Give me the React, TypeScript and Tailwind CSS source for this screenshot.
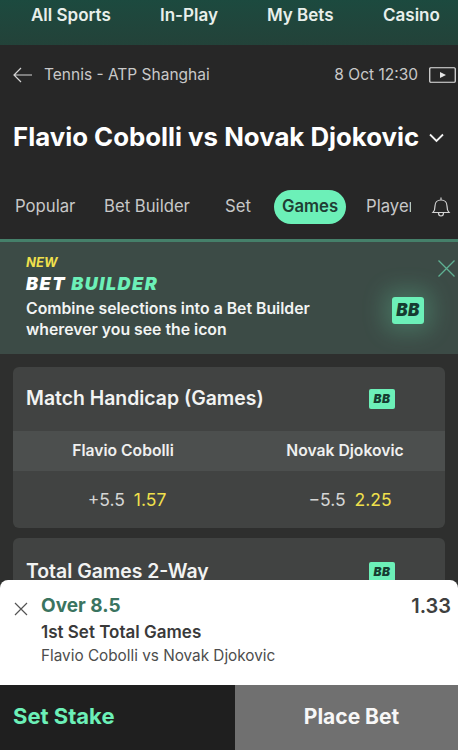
import React from "react";

function BB({ big }: { big?: boolean }) {
  return (
    <div
      className={
        big
          ? "flex h-[27px] w-[32px] items-center justify-center rounded-[3px] bg-[#6cf0b8] text-[17px] font-black italic tracking-[0.5px] text-[#163c30] shadow-[0_0_22px_8px_rgba(108,240,184,0.22)]"
          : "flex h-[20px] w-[26px] items-center justify-center rounded-[2px] bg-[#6cf0b8] text-[12px] font-black italic tracking-[0.5px] text-[#163c30]"
      }
    >
      BB
    </div>
  );
}

function CardHead({ title }: { title: string }) {
  return (
    <div className="flex h-[64px] items-center justify-between pl-[13px] pr-[50px]">
      <span className="text-[19.4px] font-semibold text-[#f2f3f2]">{title}</span>
      <BB />
    </div>
  );
}

export default function App() {
  return (
    <div className="relative flex h-[750px] w-[458px] flex-col overflow-hidden bg-[#2e2f2e] font-['Inter',sans-serif]">
      <nav className="flex h-[45px] items-start bg-gradient-to-b from-[#1c4a3f] to-[#234239] pt-[3px] text-[17px] font-semibold text-[#e8efeb]">
        <span className="ml-[31px] w-[129px]">All Sports</span>
        <span className="w-[107px]">In-Play</span>
        <span className="w-[116px]">My Bets</span>
        <span>Casino</span>
      </nav>

      <header className="flex h-[194px] flex-col bg-[#272727]">
        <div className="flex h-[59px] items-center pl-[13px] pr-[2px] text-[15.5px] text-[#c9c9c9]">
          <svg width="20" height="16" viewBox="0 0 20 16" fill="none" stroke="#d4d4d4" strokeWidth="1.2">
            <path d="M19 8H1M8 1 1 8l7 7" />
          </svg>
          <span className="ml-[11px]">Tennis - ATP Shanghai</span>
          <span className="ml-auto">8 Oct 12:30</span>
          <svg className="ml-[11px]" width="27" height="16" viewBox="0 0 27 16" fill="none">
            <rect x="0.75" y="0.75" width="25.5" height="14.5" rx="1" stroke="#e5e5e5" strokeWidth="1.2" />
            <path d="M11 5l6 3-6 3z" fill="#e5e5e5" />
          </svg>
        </div>
        <div className="mt-[10px] flex h-[45px] items-center pl-[13px] text-[25.8px] font-bold leading-none text-white">
          <span>Flavio Cobolli vs Novak Djokovic</span>
          <svg className="ml-[10px] mt-[2px]" width="15" height="10" viewBox="0 0 15 10" fill="none" stroke="#f2f2f2" strokeWidth="1.8">
            <path d="M1 1.5l6.5 6.5L14 1.5" />
          </svg>
        </div>
        <div className="mt-[30px] flex h-[35px] items-center pl-[15px] text-[16.7px] text-[#c8c8c8]">
          <span className="w-[60px]">Popular</span>
          <span className="ml-[29px] w-[88px]">Bet Builder</span>
          <span className="ml-[33px] w-[25px]">Set</span>
          <span className="ml-[24px] flex h-[34px] w-[72px] items-center justify-center rounded-full bg-[#6cf0b8] font-semibold text-[#1f3d33]">Games</span>
          <span className="ml-[20px] w-[45px] overflow-hidden whitespace-nowrap">Player</span>
          <svg className="ml-[20px]" width="20" height="22" viewBox="0 0 20 22" fill="none" stroke="#d4d4d4" strokeWidth="1.2">
            <path d="M2 16.5c1.5-1.5 2-3 2-6.5 0-3.5 2.3-6 6-6s6 2.500 6 6c0 3.500.5 5 2 6.500zM10 4V1.500M7.500 17c0 2 1 3 2.500 3s2.500-1 2.500-3" />
          </svg>
        </div>
      </header>

      <section className="relative flex h-[115px] items-start justify-between border-t-[3px] border-[#45806a] bg-[#3c4b46] pl-[26px] pr-[34px]">
        <div className="pt-[12px]">
          <div className="text-[13px] font-bold italic leading-[16px] text-[#f0e04c]">NEW</div>
          <div className="mt-[3px] text-[18px] font-black italic leading-[22px] tracking-[1.5px] text-white">
            BET <span className="text-[#6cf0b8]">BUILDER</span>
          </div>
          <div className="mt-[3px] text-[15.8px] font-semibold leading-[21px] text-[#f2f4f3]">
            Combine selections into a Bet Builder
            <br />
            wherever you see the icon
          </div>
        </div>
        <div className="mt-[55px]">
          <BB big />
        </div>
        <svg className="absolute right-[2px] top-[17px]" width="19" height="19" viewBox="0 0 19 19" fill="none" stroke="#5fb093" strokeWidth="1.3">
          <path d="M1.500 1.500l16 16M17.500 1.500l-16 16" />
        </svg>
      </section>

      <main className="flex flex-1 flex-col gap-[10px] px-[13px] pt-[13px]">
        <div className="overflow-hidden rounded-[6px] bg-[#414342]">
          <CardHead title="Match Handicap (Games)" />
          <div className="grid h-[40px] grid-cols-2 bg-[#4c4f4e] text-[15.7px] font-semibold text-[#eff0ef]">
            <span className="flex items-center justify-center pl-[4px]">Flavio Cobolli</span>
            <span className="flex items-center justify-center pl-[16px]">Novak Djokovic</span>
          </div>
          <div className="grid h-[57px] grid-cols-2 pt-[2px] text-[17.5px]">
            <span className="flex items-center justify-center gap-[9px] pl-[12px] text-[#d5d6d5]">
              +5.5 <span className="text-[#f0e04c]">1.57</span>
            </span>
            <span className="flex items-center justify-center gap-[9px] pl-[26px] text-[#d5d6d5]">
              −5.5 <span className="text-[#f0e04c]">2.25</span>
            </span>
          </div>
        </div>
        <div className="overflow-hidden rounded-t-[6px] bg-[#414342] pt-[2px]">
          <CardHead title="Total Games 2-Way" />
        </div>
      </main>

      <div className="absolute inset-x-0 bottom-0">
        <div className="flex h-[105px] rounded-t-[8px] bg-white pl-[14px] pr-[7px] pt-[14px]">
          <svg className="mt-[8px]" width="14" height="14" viewBox="0 0 14 14" fill="none" stroke="#545454" strokeWidth="1.2">
            <path d="M1 1l12 12M13 1 1 13" />
          </svg>
          <div className="ml-[13px] flex-1">
            <div className="text-[19px] font-bold leading-[24px] text-[#3a7460]">Over 8.5</div>
            <div className="mt-[3px] text-[17px] font-semibold leading-[23px] text-[#3a3a3a]">1st Set Total Games</div>
            <div className="text-[15.3px] leading-[23px] text-[#4d4d4d]">Flavio Cobolli vs Novak Djokovic</div>
          </div>
          <div className="text-[20px] font-semibold leading-[24px] text-[#3f3f3f]">1.33</div>
        </div>
        <div className="flex h-[65px] items-center text-[22px] font-bold">
          <div className="flex h-full w-[235px] items-center bg-[#1f1f1f] pb-[2px] pl-[13px] text-[#6cf0b8]">Set Stake</div>
          <div className="flex h-full flex-1 items-center justify-center bg-[#707070] pb-[2px] pl-[10px] text-[21px] text-[#f7f7f7]">Place Bet</div>
        </div>
      </div>
    </div>
  );
}
